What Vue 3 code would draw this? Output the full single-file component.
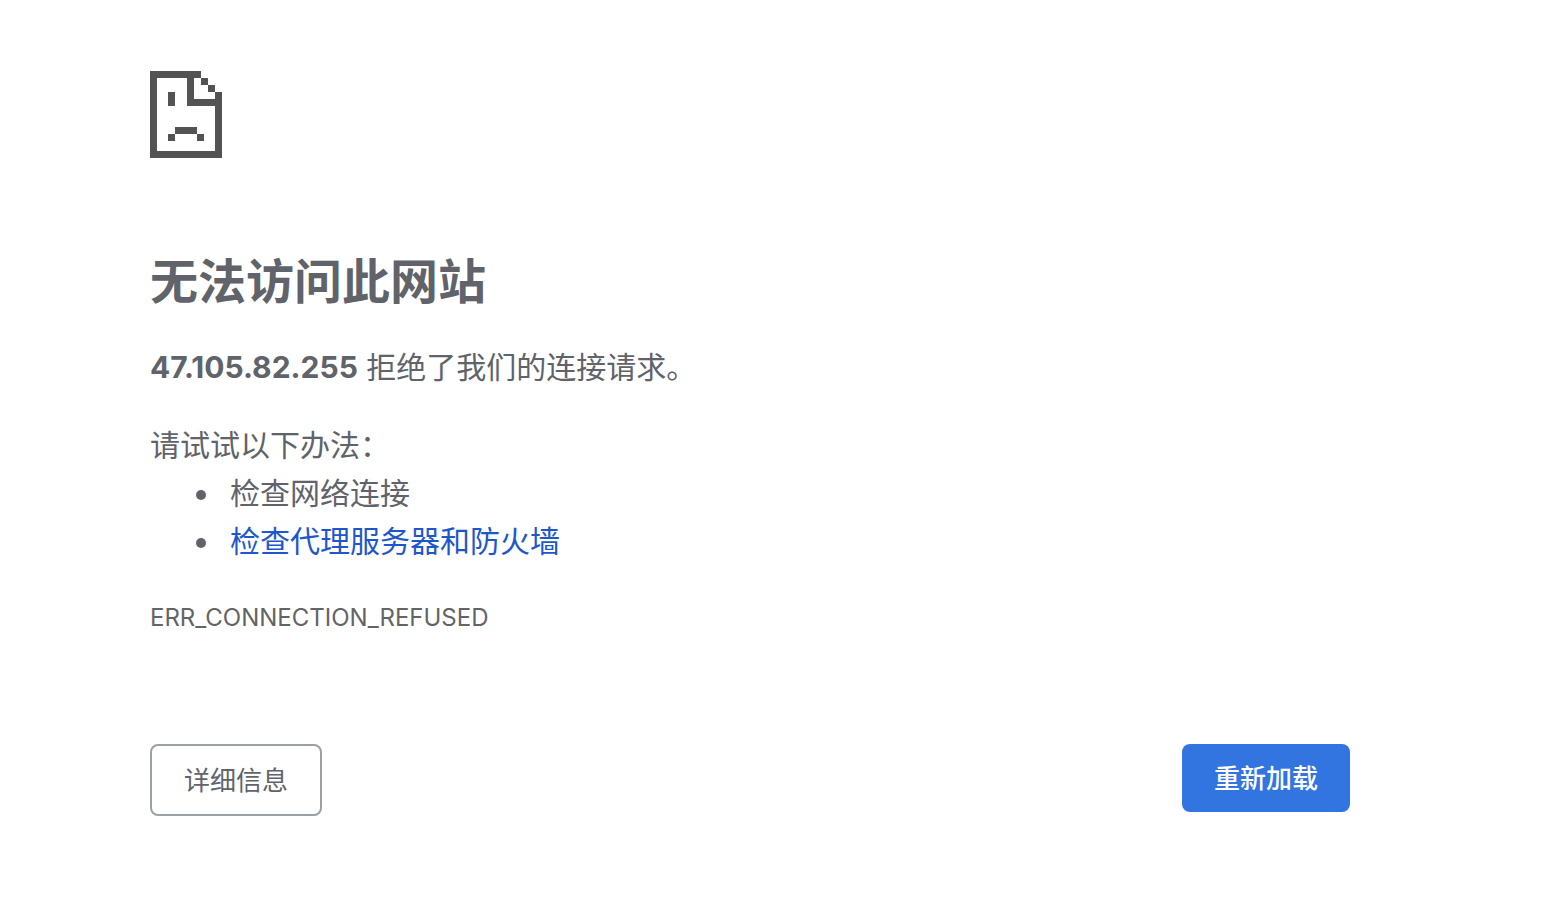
<script setup>
const host = '47.105.82.255'
const errorCode = 'ERR_CONNECTION_REFUSED'
</script>

<template>
  <main class="page">
    <svg class="sad-page" viewBox="0 0 72 87" shape-rendering="crispEdges" aria-hidden="true">
      <path d="M0 0H51V7H44V28H65V21H72V87H0ZM7 7V80H65V35H37V7Z" fill-rule="evenodd" />
      <path d="M51 7H58V14H65V21H58V14H51ZM18 21H25V35H18ZM25 56H47V63H54V70H47V63H25V70H18V63H25Z" />
    </svg>

    <h1 class="title">无法访问此网站</h1>
    <p class="summary"><strong>{{ host }}</strong> 拒绝了我们的连接请求。</p>

    <section class="suggestions">
      <p class="lead">请试试以下办法：</p>
      <ul class="list">
        <li>检查网络连接</li>
        <li><a class="link" href="#proxy">检查代理服务器和防火墙</a></li>
      </ul>
    </section>

    <p class="code">{{ errorCode }}</p>

    <div class="actions">
      <button class="button secondary" type="button">详细信息</button>
      <button class="button primary" type="button">重新加载</button>
    </div>
  </main>
</template>

<style>
body {
  margin: 0;
  background: #fff;
}
</style>

<style scoped>
.page {
  box-sizing: border-box;
  padding: 71px 192px 92px 150px;
  color: #60636a;
  font-family: Inter, "Noto Sans CJK SC", sans-serif;
  font-size: 30px;
  line-height: 48px;
}

.sad-page {
  display: block;
  width: 72px;
  height: 87px;
  fill: #535353;
}

.title {
  margin: 94px 0 31px;
  font-size: 48px;
  font-weight: 600;
  line-height: 60px;
}

.summary,
.lead,
.code {
  margin: 0;
}

.suggestions {
  margin-top: 30px;
}

.list {
  margin: 0;
  padding-left: 72px;
}

.list li {
  padding-left: 8px;
}

.link {
  color: #1e57cb;
  text-decoration: none;
}

.code {
  margin-top: 29px;
  color: #646464;
  font-size: 24px;
}

.actions {
  display: flex;
  flex-wrap: wrap;
  align-items: flex-start;
  justify-content: space-between;
  gap: 16px;
  margin-top: 102px;
}

.button {
  padding: 15px 32px 13px;
  border: 0;
  border-radius: 8px;
  font-family: inherit;
  font-size: 26px;
  line-height: 40px;
  cursor: pointer;
}

.secondary {
  border: 2px solid #9aa0a6;
  background: #fff;
  color: #60636a;
}

.primary {
  background: #3275e0;
  color: #fff;
  font-weight: 500;
}
</style>
